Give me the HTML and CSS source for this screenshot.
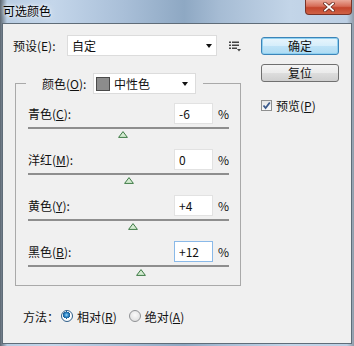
FILE: index.html
```html
<!DOCTYPE html>
<html lang="zh-CN">
<head>
    <meta charset="UTF-8">
    <meta name="viewport" content="width=device-width, initial-scale=1.0">
    <title>可选颜色</title>
    <link rel="stylesheet" href="styles.css">
</head>
<body>
    <div class="window">
        <div class="titlebar">
            <span class="title">可选颜色</span>
            <button class="close-btn">
                <svg width="12" height="10" viewBox="0 0 12 10">
                    <path d="M2 1.5 L10 8.5 M10 1.5 L2 8.5" stroke="#6a2a1e" stroke-width="3.4" stroke-linecap="square"/>
                    <path d="M2 1.5 L10 8.5 M10 1.5 L2 8.5" stroke="#fff" stroke-width="1.8" stroke-linecap="square"/>
                </svg>
            </button>
        </div>
        <div class="client">
            <div class="main">
                <div class="preset-row">
                    <span class="preset-label">预设(E):</span>
                    <div class="select preset-select">
                        <span>自定</span>
                        <span class="arrow"></span>
                    </div>
                    <svg class="preset-menu" width="12" height="11" viewBox="0 0 12 11">
                        <rect x="0" y="0.5" width="2" height="1.5" fill="#444"/>
                        <rect x="3" y="0.5" width="7" height="1.5" fill="#444"/>
                        <rect x="0" y="3.5" width="2" height="1.5" fill="#444"/>
                        <rect x="3" y="3.5" width="7" height="1.5" fill="#444"/>
                        <rect x="0" y="6.5" width="2" height="1.5" fill="#444"/>
                        <rect x="3" y="6.5" width="5" height="1.5" fill="#444"/>
                        <path d="M8 8 L12 8 L10 10.5 Z" fill="#444"/>
                    </svg>
                </div>

                <fieldset class="color-group">
                    <legend>
                        <div class="legend-inner">
                            <span class="legend-label">颜色(<u>O</u>):</span>
                            <div class="select color-select">
                                <span class="swatch"></span>
                                <span>中性色</span>
                                <span class="arrow"></span>
                            </div>
                        </div>
                    </legend>

                    <div class="adj-row">
                        <div class="row-head">
                            <span class="row-label">青色(<u>C</u>):</span>
                            <input class="value" type="text" value="-6">
                            <span class="pct">%</span>
                        </div>
                        <div class="slider">
                            <div class="track"></div>
                            <svg class="thumb" style="left: 90px" width="10" height="7" viewBox="0 0 10 7"><path d="M5 0.6 L9.4 6.4 L0.6 6.4 Z" fill="#d3ead0" stroke="#3d7a45" stroke-width="1"/></svg>
                        </div>
                    </div>

                    <div class="adj-row">
                        <div class="row-head">
                            <span class="row-label">洋红(<u>M</u>):</span>
                            <input class="value" type="text" value="0">
                            <span class="pct">%</span>
                        </div>
                        <div class="slider">
                            <div class="track"></div>
                            <svg class="thumb" style="left: 96px" width="10" height="7" viewBox="0 0 10 7"><path d="M5 0.6 L9.4 6.4 L0.6 6.4 Z" fill="#d3ead0" stroke="#3d7a45" stroke-width="1"/></svg>
                        </div>
                    </div>

                    <div class="adj-row">
                        <div class="row-head">
                            <span class="row-label">黄色(<u>Y</u>):</span>
                            <input class="value" type="text" value="+4">
                            <span class="pct">%</span>
                        </div>
                        <div class="slider">
                            <div class="track"></div>
                            <svg class="thumb" style="left: 100px" width="10" height="7" viewBox="0 0 10 7"><path d="M5 0.6 L9.4 6.4 L0.6 6.4 Z" fill="#d3ead0" stroke="#3d7a45" stroke-width="1"/></svg>
                        </div>
                    </div>

                    <div class="adj-row">
                        <div class="row-head">
                            <span class="row-label">黑色(<u>B</u>):</span>
                            <input class="value focused" type="text" value="+12">
                            <span class="pct">%</span>
                        </div>
                        <div class="slider">
                            <div class="track"></div>
                            <svg class="thumb" style="left: 108px" width="10" height="7" viewBox="0 0 10 7"><path d="M5 0.6 L9.4 6.4 L0.6 6.4 Z" fill="#d3ead0" stroke="#3d7a45" stroke-width="1"/></svg>
                        </div>
                    </div>
                </fieldset>

                <div class="method-row">
                    <span class="method-label">方法：</span>
                    <span class="radio checked"></span>
                    <span>相对(<u>R</u>)</span>
                    <span class="radio second"></span>
                    <span>绝对(<u>A</u>)</span>
                </div>
            </div>

            <div class="side">
                <button class="btn btn-default">确定</button>
                <button class="btn">复位</button>
                <label class="check">
                    <span class="checkbox">
                        <svg width="9" height="9" viewBox="0 0 9 9"><path d="M1.5 4.5 L3.6 7 L7.8 1.5" fill="none" stroke="#3b5a8c" stroke-width="1.8"/></svg>
                    </span>
                    <span>预览(<u>P</u>)</span>
                </label>
            </div>
        </div>
    </div>
</body>
</html>
```

FILE: styles.css
```css
body {
    margin: 0;
    font-family: "Noto Sans CJK SC", sans-serif;
    font-size: 12px;
    color: #111;
}
u {
    text-underline-offset: 1px;
}
.window {
    width: 354px;
    height: 346px;
    display: flex;
    flex-direction: column;
    overflow: hidden;
    background: linear-gradient(to right, #5c6670 0%, #b9cde3 2%, #c4d6ea 15%, #a9bfd8 35%, #8ea8c3 52%, #a6bcd4 62%, #c3d5e8 82%, #bccfe4 98%, #8e9ba8 100%);
}
.titlebar {
    height: 23px;
    display: flex;
    justify-content: space-between;
    align-items: flex-start;
    padding: 0 2px 0 3px;
    flex: none;
}
.title {
    line-height: 21px;
    color: #000;
    text-shadow: 0 0 6px rgba(255,255,255,0.9), 0 0 3px rgba(255,255,255,0.9);
}
.close-btn {
    width: 47px;
    height: 15px;
    padding: 0;
    border: 1px solid #7a3327;
    border-top: none;
    border-radius: 0 0 4px 4px;
    background: linear-gradient(#eaa899, #d66c57 45%, #c4452c 55%, #cf6246);
    display: flex;
    align-items: center;
    justify-content: center;
}
.client {
    flex: none;
    height: 319px;
    margin: 0 2px;
    border: 1px solid #5f6c78;
    background-color: #f0f0f0;
    display: flex;
}
.main {
    width: 228px;
    padding: 11px 0 0 10px;
}
.preset-row {
    display: flex;
    align-items: center;
    height: 21px;
}
.preset-label {
    width: 54px;
}
.select {
    display: flex;
    align-items: center;
    height: 21px;
    box-sizing: border-box;
    background-color: #fff;
    border: 1px solid #dcdcdc;
    padding: 0 4px;
}
.preset-select {
    width: 150px;
}
.arrow {
    margin-left: auto;
    width: 0;
    height: 0;
    border-left: 3.5px solid transparent;
    border-right: 3.5px solid transparent;
    border-top: 4px solid #111;
}
.preset-menu {
    margin-left: 12px;
    margin-top: 2px;
}
.color-group {
    margin: 17px 0 0 2px;
    padding: 0 11px 2px 12px;
    width: 201px;
    border: 1px solid #a9a9a9;
}
.color-group legend {
    padding: 0 7px 0 16px;
    margin-left: -2px;
}
.legend-inner {
    display: flex;
    align-items: center;
    height: 21px;
}
.legend-label {
    width: 51px;
}
.color-select {
    width: 103px;
    padding: 0 7px 0 2px;
}
.swatch {
    width: 12px;
    height: 12px;
    border: 1px solid #4a4a4a;
    background-color: #8c8c8c;
    margin-right: 4px;
}
.adj-row {
    margin-top: 4px;
}
.adj-row:first-of-type {
    margin-top: 9px;
}
.row-head {
    display: flex;
    align-items: center;
    height: 21px;
}
.row-label {
    flex: 1;
}
.value {
    width: 39px;
    height: 21px;
    box-sizing: border-box;
    border: 1px solid #e2e2e2;
    padding: 0 4px;
    margin: 0;
    font: inherit;
    color: #111;
    background-color: #fff;
    outline: none;
}
.value.focused {
    border-color: #8ab9e8;
}
.pct {
    width: 16px;
    box-sizing: border-box;
    padding-left: 5px;
}
.slider {
    position: relative;
    height: 18px;
    margin-top: 3px;
}
.track {
    height: 2px;
    background-color: #8e8e8e;
}
.thumb {
    position: absolute;
    top: 4px;
}
.method-row {
    display: flex;
    align-items: center;
    height: 16px;
    margin-top: 22px;
    padding-left: 10px;
}
.radio {
    width: 12px;
    height: 12px;
    box-sizing: border-box;
    border-radius: 50%;
    border: 1px solid #8f9194;
    background: radial-gradient(circle at 50% 40%, #fafafa, #d9d9d9);
    margin: 0 4px 0 2px;
}
.radio.checked {
    border-color: #2f5f8a;
    background: radial-gradient(circle at 45% 40%, #9bd4f5 0, #2a84c6 2px, #1b5c93 3.5px, #fff 3.6px, #eef2f5 100%);
}
.radio.second {
    margin-left: 12px;
}
.side {
    width: 78px;
    margin-left: 20px;
    padding-top: 13px;
    display: flex;
    flex-direction: column;
}
.btn {
    width: 78px;
    height: 18px;
    padding: 0;
    border: 1px solid #707070;
    border-radius: 3px;
    background: linear-gradient(#f4f4f4, #ebebeb 48%, #dddddd 52%, #cfcfcf);
    font: inherit;
    color: #111;
    line-height: 16px;
}
.btn-default {
    border-color: #3c84b8;
    background: linear-gradient(#e8f5fc, #d6eefb 48%, #bfe3f7 52%, #addbf3);
    box-shadow: inset 0 0 0 1px #8fd0f0;
}
.btn + .btn {
    margin-top: 9px;
}
.check {
    margin-top: 15px;
    display: flex;
    align-items: center;
    gap: 4px;
}
.checkbox {
    width: 11px;
    height: 11px;
    box-sizing: border-box;
    border: 1px solid #8e8f8f;
    background: linear-gradient(#e6e6e6, #fafafa);
    display: flex;
    align-items: center;
    justify-content: center;
}
```
